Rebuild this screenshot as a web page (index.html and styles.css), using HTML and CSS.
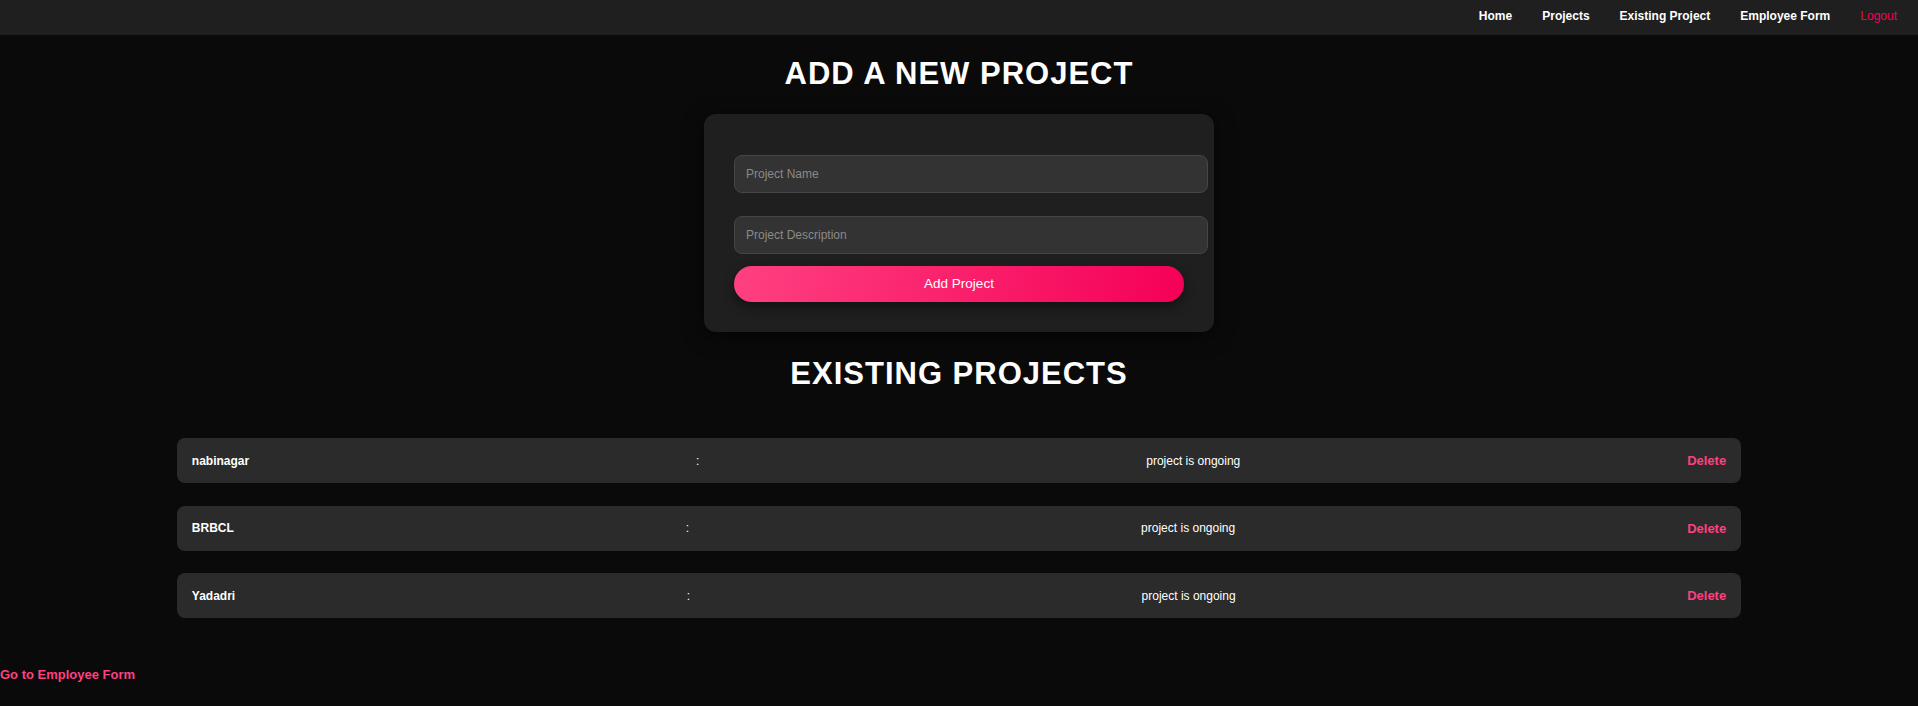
FILE: index.html
```html
<!DOCTYPE html>
<html lang="en">
<head>
<meta charset="utf-8">
<title>Add Project</title>
<link rel="stylesheet" href="styles.css">
</head>
<body>
<nav class="navbar">
  <a class="nav-link" href="#">Home</a>
  <a class="nav-link" href="#">Projects</a>
  <a class="nav-link" href="#">Existing Project</a>
  <a class="nav-link" href="#">Employee Form</a>
  <a class="nav-link logout" href="#">Logout</a>
</nav>

<h1 class="title">ADD A NEW PROJECT</h1>
<form class="card">
  <input class="field" type="text" placeholder="Project Name">
  <input class="field" type="text" placeholder="Project Description">
  <button class="add-btn" type="button">Add Project</button>
</form>

<h1 class="title title-second">EXISTING PROJECTS</h1>
<ul class="project-list">
  <li class="project-item">
    <span class="project-name">nabinagar</span>
    <span class="project-sep">:</span>
    <span class="project-desc">project is ongoing</span>
    <button class="delete-btn" type="button">Delete</button>
  </li>
  <li class="project-item">
    <span class="project-name">BRBCL</span>
    <span class="project-sep">:</span>
    <span class="project-desc">project is ongoing</span>
    <button class="delete-btn" type="button">Delete</button>
  </li>
  <li class="project-item">
    <span class="project-name">Yadadri</span>
    <span class="project-sep">:</span>
    <span class="project-desc">project is ongoing</span>
    <button class="delete-btn" type="button">Delete</button>
  </li>
</ul>

<div class="footer-link-wrap">
  <a class="footer-link" href="#">Go to Employee Form</a>
</div>
</body>
</html>
```

FILE: styles.css
```css
* {
  box-sizing: border-box;
}

html, body {
  margin: 0;
  padding: 0;
}

body {
  background: #0a0a0a;
  color: #ffffff;
  font-family: "Liberation Sans", Arial, sans-serif;
}

.navbar {
  display: flex;
  justify-content: flex-end;
  align-items: flex-start;
  gap: 30px;
  height: 35px;
  padding: 9px 21px 0 0;
  background: #1f1f1f;
}

.nav-link {
  color: #ffffff;
  font-size: 12px;
  font-weight: bold;
  text-decoration: none;
  line-height: 14px;
}

.nav-link.logout {
  color: #f50057;
  font-weight: normal;
}

.title {
  margin: 20px 0 22px;
  text-align: center;
  font-size: 31px;
  letter-spacing: 1px;
  font-weight: bold;
  color: #ffffff;
  line-height: 37px;
}

.title-second {
  margin-top: 23px;
}

.card {
  display: flex;
  flex-direction: column;
  width: 510px;
  margin: 0 auto;
  padding: 30px;
  background: #1f1f1f;
  border-radius: 12px;
  box-shadow: 0 4px 20px rgba(0, 0, 0, 0.6);
}

.field {
  display: block;
  box-sizing: content-box;
  width: 100%;
  margin: 11px 0 12px;
  padding: 11px;
  font-family: "Liberation Sans", Arial, sans-serif;
  font-size: 12px;
  line-height: 14px;
  color: #ffffff;
  background: #333333;
  border: 1px solid #464646;
  border-radius: 8px;
  outline: none;
}

.field::placeholder {
  color: #8a8a8a;
}

.add-btn {
  display: block;
  width: 100%;
  padding: 10px 0;
  font-family: "Liberation Sans", Arial, sans-serif;
  font-size: 13.5px;
  line-height: 16.4px;
  color: #ffffff;
  background: linear-gradient(100deg, #ff4081 0%, #f50057 100%);
  border: none;
  border-radius: 20px;
  box-shadow: 0 5px 12px rgba(0, 0, 0, 0.45);
  cursor: pointer;
}

.project-list {
  list-style: none;
  margin: 0;
  padding: 24px 0 0;
  display: flex;
  flex-direction: column;
  align-items: center;
  gap: 22.4px;
}

.project-item {
  display: flex;
  justify-content: space-between;
  align-items: center;
  width: calc(80% + 30px);
  padding: 15px;
  background: #2b2b2b;
  border-radius: 8px;
}

.project-name {
  font-size: 12px;
  font-weight: bold;
  color: #ffffff;
}

.project-sep {
  font-size: 12px;
  color: #ffffff;
}

.project-desc {
  font-size: 12px;
  color: #ffffff;
}

.delete-btn {
  padding: 0;
  font-family: "Liberation Sans", Arial, sans-serif;
  font-size: 13px;
  font-weight: bold;
  line-height: 15px;
  color: #ff4081;
  background: none;
  border: none;
  cursor: pointer;
}

.footer-link-wrap {
  margin-top: 47px;
}

.footer-link {
  font-size: 13px;
  font-weight: bold;
  line-height: 15px;
  color: #ff4081;
  text-decoration: none;
}
```
